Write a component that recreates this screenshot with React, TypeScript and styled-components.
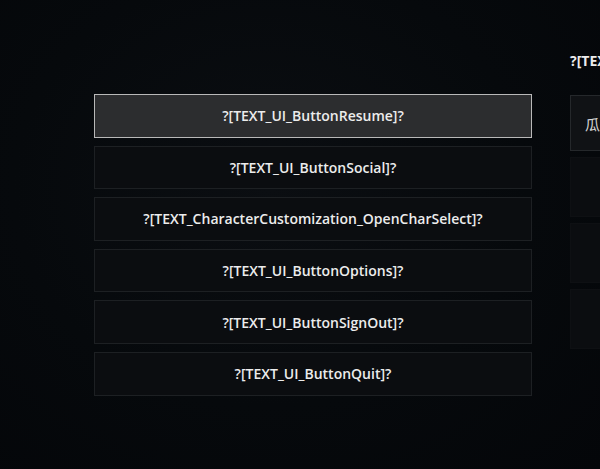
import React from 'react'
import styled, { createGlobalStyle } from 'styled-components'

const GlobalStyle = createGlobalStyle`
  html, body {
    margin: 0;
    padding: 0;
    background: #05080b;
  }
  body {
    font-family: "Open Sans", "Noto Sans CJK SC", sans-serif;
  }
`

const Screen = styled.div`
  width: 600px;
  height: 469px;
  overflow: hidden;
  display: flex;
  align-items: flex-start;
  background: radial-gradient(ellipse at 45% 40%, #0b0e12 0%, #06090c 55%, #040609 100%);
`

const Menu = styled.ul`
  list-style: none;
  margin: 94px 0 0 94px;
  padding: 0;
  width: 438px;
  flex-shrink: 0;
  display: flex;
  flex-direction: column;
  gap: 8px;
`

type MenuButtonProps = {
  $active?: boolean
}

const MenuButton = styled.li<MenuButtonProps>`
  height: 43.6px;
  box-sizing: border-box;
  display: flex;
  align-items: center;
  justify-content: center;
  background: ${ props => props.$active ? '#2c2d2f' : '#0b0d10' };
  border: 1px solid ${ props => props.$active ? '#b9b9b9' : '#1d2023' };
  color: #ececec;
  font-size: 14px;
  font-weight: 600;
  white-space: nowrap;
`

const SidePanel = styled.section`
  margin: 51px 0 0 38px;
  width: 200px;
  flex-shrink: 0;
  display: flex;
  flex-direction: column;
`

const SideTitle = styled.h2`
  margin: 0 0 24px;
  height: 20px;
  color: #ececec;
  font-size: 14px;
  font-weight: 700;
  line-height: 20px;
  white-space: nowrap;
`

const SideList = styled.div`
  display: flex;
  flex-direction: column;
  gap: 6px;
`

const SideCard = styled.div<MenuButtonProps>`
  height: ${ props => props.$active ? '56px' : '60px' };
  box-sizing: border-box;
  display: flex;
  align-items: center;
  padding-left: 14px;
  background: ${ props => props.$active ? '#101215' : '#0b0d10' };
  border: 1px solid ${ props => props.$active ? '#25282b' : '#0e1013' };
  color: #d8d8d8;
  font-size: 15px;
`

const buttons = [
  '?[TEXT_UI_ButtonResume]?',
  '?[TEXT_UI_ButtonSocial]?',
  '?[TEXT_CharacterCustomization_OpenCharSelect]?',
  '?[TEXT_UI_ButtonOptions]?',
  '?[TEXT_UI_ButtonSignOut]?',
  '?[TEXT_UI_ButtonQuit]?',
]

export default () => {
  return (
    <Screen>
      <GlobalStyle />
      <Menu>
        { buttons.map((label, i) =>
          <MenuButton key={ label } $active={ i === 0 }>{ label }</MenuButton>) }
      </Menu>
      <SidePanel>
        <SideTitle>?[TEXT_UI_Characters]?</SideTitle>
        <SideList>
          <SideCard $active>瓜</SideCard>
          <SideCard />
          <SideCard />
          <SideCard />
        </SideList>
      </SidePanel>
    </Screen>
  )
}
